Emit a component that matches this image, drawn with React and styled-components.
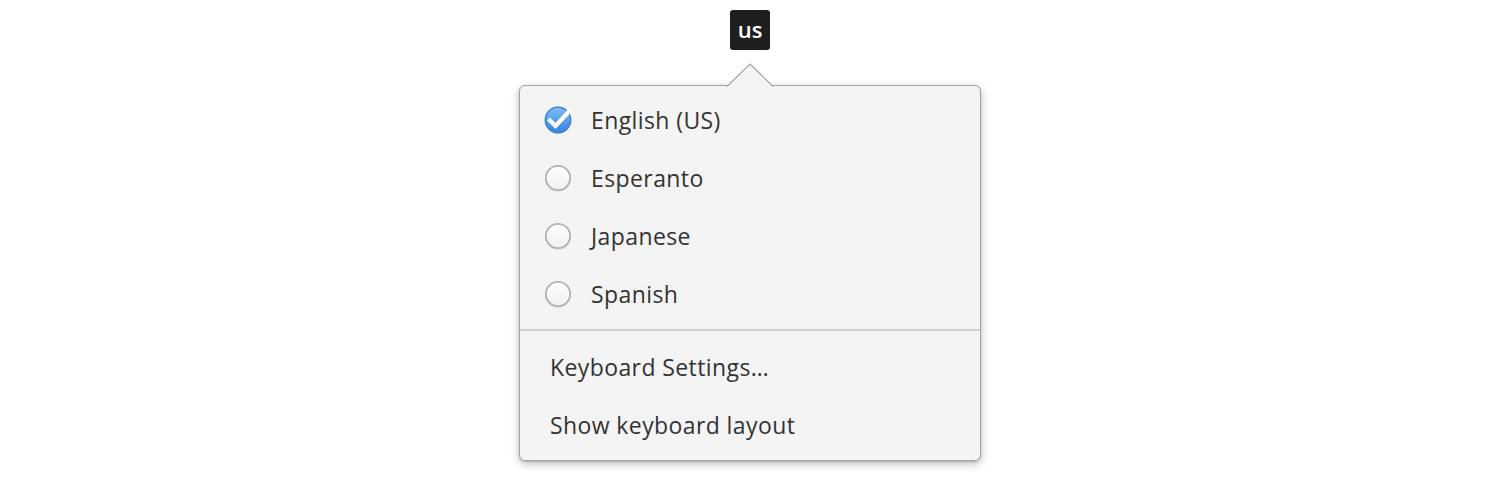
import React from "react";
import styled, { createGlobalStyle } from "styled-components";

const Global = createGlobalStyle`
  html, body { margin: 0; padding: 0; background: #ffffff; }
  body { font-family: "Open Sans", "Noto Sans", sans-serif; }
`;

const Page = styled.div`
  width: 1500px;
  height: 504px;
  display: flex;
  flex-direction: column;
  align-items: center;
  padding-top: 10px;
  box-sizing: border-box;
`;

const Indicator = styled.div`
  width: 40px;
  height: 40px;
  border-radius: 3px;
  background: #1f1f1f;
  color: #ffffff;
  font-size: 22px;
  font-weight: 600;
  display: flex;
  align-items: center;
  justify-content: center;
  line-height: 1;
  padding-bottom: 3px;
  box-sizing: border-box;
`;

const Popover = styled.div`
  position: relative;
  margin-top: 35px;
  width: 462px;
  box-sizing: border-box;
  background: #f4f4f4;
  border: 1px solid #a3a3a3;
  border-radius: 6px;
  box-shadow: 0 3px 9px rgba(0, 0, 0, 0.25), 0 1px 2px rgba(0, 0, 0, 0.15);
  padding: 5px 0 6px;
  display: flex;
  flex-direction: column;
`;

const Arrow = styled.svg`
  position: absolute;
  top: -23px;
  left: 50%;
  margin-left: -23px;
  width: 46px;
  height: 24px;
  overflow: visible;
`;

const Item = styled.div`
  height: 58px;
  display: flex;
  align-items: center;
  gap: 19px;
  padding-left: ${(p) => (p.$radio ? "24px" : "30px")};
  font-size: 23px;
  color: #333333;
  letter-spacing: 0.4px;
`;

const Separator = styled.div`
  height: 2px;
  background: #d0d0d0;
  margin: 6px 0 7px;
`;

const RadioIcon = styled.svg`
  width: 28px;
  height: 28px;
  flex: none;
  overflow: visible;
`;

function Radio({ checked }) {
  if (checked) {
    return (
      <RadioIcon viewBox="0 0 28 28">
        <defs>
          <linearGradient id="chk" x1="0" y1="0" x2="0" y2="1">
            <stop offset="0" stopColor="#7dbdf5" />
            <stop offset="1" stopColor="#3584e0" />
          </linearGradient>
        </defs>
        <circle cx="14" cy="14.8" r="13" fill="rgba(0,0,0,0.12)" />
        <circle cx="14" cy="14" r="12.8" fill="url(#chk)" stroke="#2f78cc" strokeWidth="1.2" />
        <path
          d="M6 14.5 L11.5 20 L25 5.5"
          fill="none"
          stroke="#ffffff"
          strokeWidth="4.2"
          strokeLinecap="square"
          strokeLinejoin="miter"
        />
      </RadioIcon>
    );
  }
  return (
    <RadioIcon viewBox="0 0 28 28">
      <defs>
        <linearGradient id="rad" x1="0" y1="0" x2="0" y2="1">
          <stop offset="0" stopColor="#ffffff" />
          <stop offset="1" stopColor="#f0f0f0" />
        </linearGradient>
      </defs>
      <circle cx="14" cy="14.8" r="13" fill="rgba(0,0,0,0.08)" />
      <circle cx="14" cy="14" r="12.2" fill="url(#rad)" stroke="#b2b2b2" strokeWidth="1.8" />
    </RadioIcon>
  );
}

const languages = [
  { name: "English (US)", checked: true },
  { name: "Esperanto" },
  { name: "Japanese" },
  { name: "Spanish" },
];

export default function App() {
  return (
    <>
      <Global />
      <Page>
        <Indicator>us</Indicator>
        <Popover>
          <Arrow viewBox="0 0 46 24">
            <path d="M0 23.5 L23 1 L46 23.5" fill="#f4f4f4" stroke="#a3a3a3" strokeWidth="1.2" />
          </Arrow>
          {languages.map((l) => (
            <Item key={l.name} $radio>
              <Radio checked={l.checked} />
              <span>{l.name}</span>
            </Item>
          ))}
          <Separator />
          <Item>Keyboard Settings…</Item>
          <Item>Show keyboard layout</Item>
        </Popover>
      </Page>
    </>
  );
}
